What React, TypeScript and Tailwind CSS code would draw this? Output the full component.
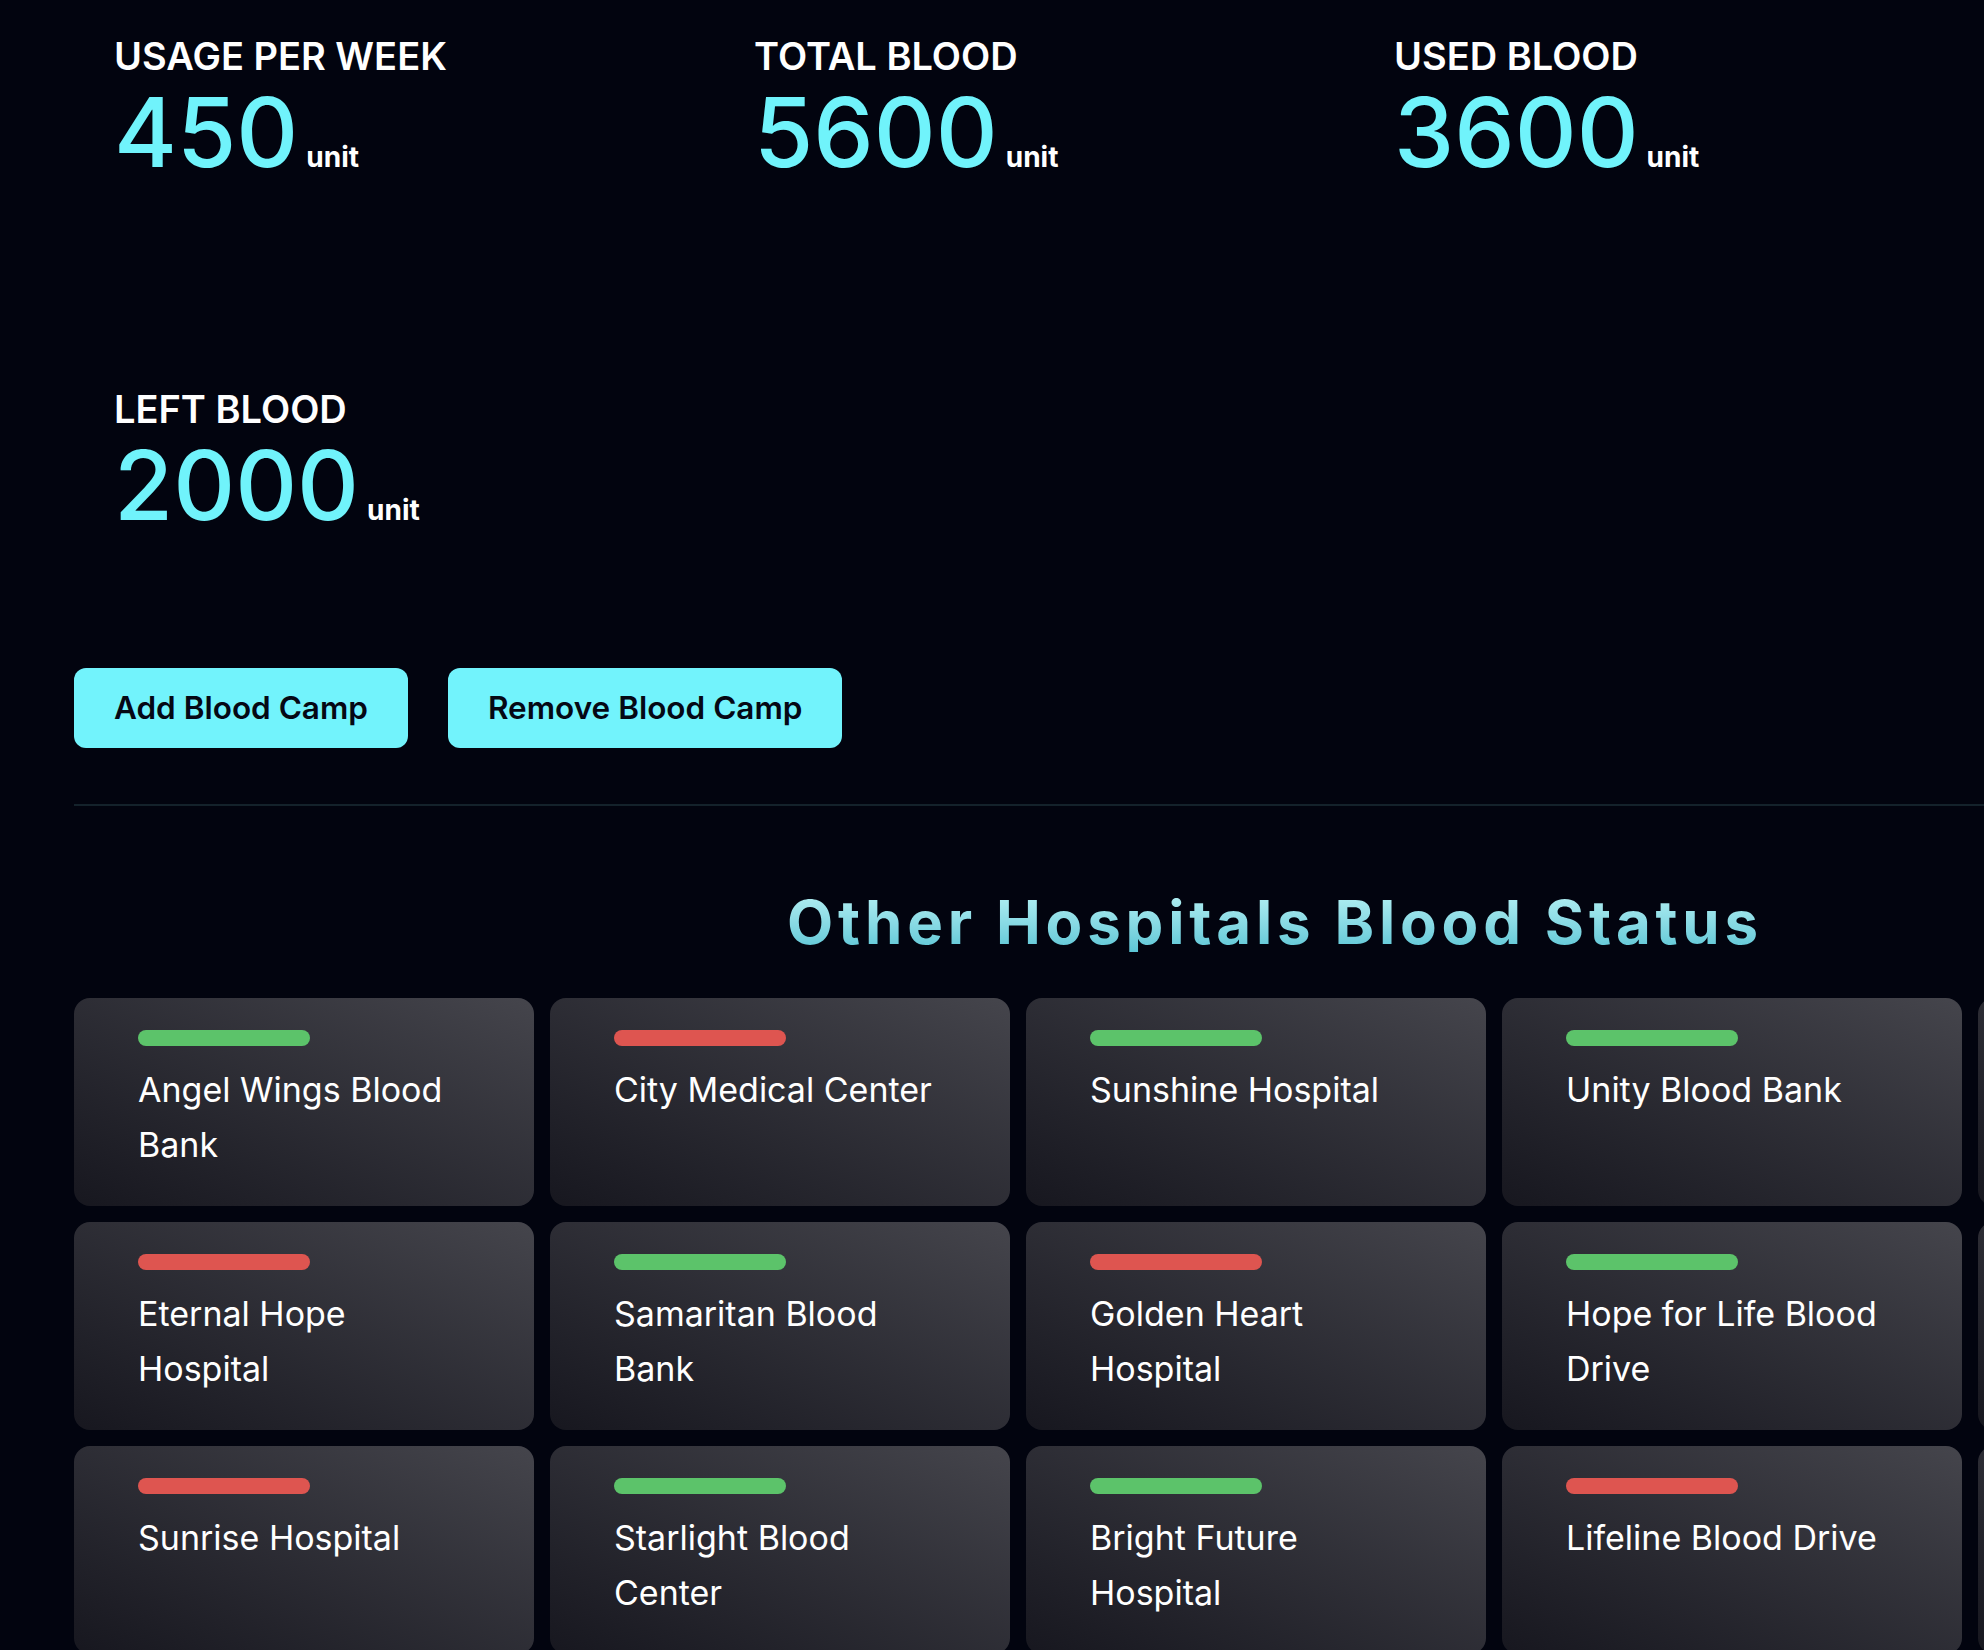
import React from 'react';

const stats = [
  { label: 'USAGE PER WEEK', value: '450' },
  { label: 'TOTAL BLOOD', value: '5600' },
  { label: 'USED BLOOD', value: '3600' },
  { label: 'LEFT BLOOD', value: '2000' },
];

const hospitals = [
  { name: 'Angel Wings Blood Bank', ok: true },
  { name: 'City Medical Center', ok: false },
  { name: 'Sunshine Hospital', ok: true },
  { name: 'Unity Blood Bank', ok: true },
  { name: 'Mercy General Hospital', ok: false },
  { name: 'Eternal Hope Hospital', ok: false },
  { name: 'Samaritan Blood Bank', ok: true },
  { name: 'Golden Heart Hospital', ok: false },
  { name: 'Hope for Life Blood Drive', ok: true },
  { name: 'Red Cross Center', ok: true },
  { name: 'Sunrise Hospital', ok: false },
  { name: 'Starlight Blood Center', ok: true },
  { name: 'Bright Future Hospital', ok: true },
  { name: 'Lifeline Blood Drive', ok: false },
  { name: 'Harmony Blood Bank', ok: false },
];

export default function App() {
  return (
    <div className="h-screen w-full overflow-hidden bg-[#02040f] font-['Inter','Noto_Sans',sans-serif]">
      <div className="w-[2550px] px-[74px]">
        {/* stats */}
        <div className="flex flex-wrap gap-y-[209px] pt-[36px]">
          {stats.map((stat) => (
            <div key={stat.label} className="w-[640px] pl-[40px]">
              <h3 className="text-[38px] leading-[40px] font-semibold text-white">{stat.label}</h3>
              <div className="mt-[8px] flex items-baseline">
                <span className="text-[96px] leading-none font-medium text-[#70f3fb]">{stat.value}</span>
                <span className="ml-[8px] text-[28px] leading-none font-bold text-white">unit</span>
              </div>
            </div>
          ))}
        </div>

        <div className="mt-[135px] flex gap-10">
          <button className="h-[80px] rounded-xl bg-[#72f3fc] px-10 text-[31.5px] font-semibold text-[#050814]">
            Add Blood Camp
          </button>
          <button className="h-[80px] rounded-xl bg-[#72f3fc] px-10 text-[31.5px] font-semibold text-[#050814]">
            Remove Blood Camp
          </button>
        </div>

        <div className="mt-[56px] h-[2px] bg-[#14222b]" />

        <div className="mt-[86px] text-center">
          <h2 className="inline-block bg-linear-to-b from-[#b4f0f3] to-[#5cc6d6] bg-clip-text text-[60px] leading-none font-bold tracking-[0.08em] text-transparent">
            Other Hospitals Blood Status
          </h2>
        </div>

        <div className="mt-[46px] grid grid-cols-[repeat(5,460px)] gap-4">
          {hospitals.map((h) => (
            <div
              key={h.name}
              className="h-[208px] rounded-2xl bg-linear-to-bl from-[#45454c] to-[#17171f] px-16 pt-8"
            >
              <div className={`h-4 w-[172px] rounded-full ${h.ok ? 'bg-[#5cc36a]' : 'bg-[#de5550]'}`} />
              <p className="mt-4 text-[34px] leading-[55px] text-white">{h.name}</p>
            </div>
          ))}
        </div>
      </div>
    </div>
  );
}
